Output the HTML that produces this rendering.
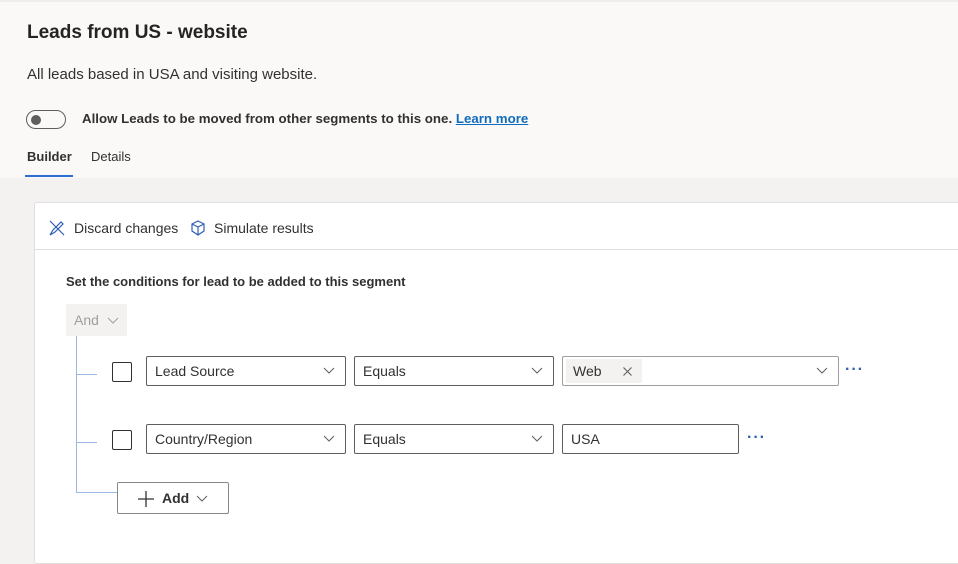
<!DOCTYPE html>
<html><head><style>
body{margin:0;width:958px;height:555px;overflow:hidden;background:#f3f2f1;font-family:"Liberation Sans",sans-serif;color:#323130;position:relative}
.a{position:absolute;white-space:nowrap}
.hdr{left:0;top:0;width:958px;height:178px;background:#faf9f8;border-top:2px solid #eee;box-sizing:border-box}
.card{left:34px;top:202px;width:940px;height:360px;background:#fff;border:1px solid #e1dfdd;border-radius:3px}
.dd{position:absolute;height:30px;border:1px solid #605e5c;border-radius:2px;box-sizing:border-box;background:#fff;font-size:14px;line-height:28px;padding-left:8px;white-space:nowrap}
.chev{position:absolute;right:10px;top:10px}
.cb{position:absolute;width:20px;height:20px;border:1px solid #323130;border-radius:2px;box-sizing:border-box}
.dots{position:absolute;color:#2f5fb3;font-size:16px;font-weight:bold;letter-spacing:1px}
</style></head><body>
<div class="a hdr"></div>
<div class="a" style="left:27px;top:22px;font-size:19px;font-weight:bold;color:#252423">Leads from US - website</div>
<div class="a" style="left:27px;top:66px;font-size:15px">All leads based in USA and visiting website.</div>
<div class="a" style="left:26px;top:110px;width:40px;height:19px;border:1px solid #605e5c;border-radius:10px;box-sizing:border-box"><div class="a" style="left:4px;top:3.5px;width:10px;height:10px;border-radius:50%;background:#605e5c"></div></div>
<div class="a" style="left:82px;top:111px;font-size:13.3px;font-weight:bold">Allow Leads to be moved from other segments to this one. <span style="color:#0f6cbd;text-decoration:underline">Learn more</span></div>
<div class="a" style="left:27px;top:149px;font-size:13px;font-weight:bold">Builder</div>
<div class="a" style="left:91px;top:149px;font-size:13px">Details</div>
<div class="a" style="left:25px;top:175px;width:48px;height:2px;background:#2e6fd6"></div>
<div class="a card"></div>
<svg class="a" style="left:48px;top:219px" width="18" height="18" viewBox="0 0 18 18" fill="none" stroke="#2f5fb3" stroke-width="1.2"><path d="M2 16 L5 11 L13 3 L15 5 L7 13 Z M2 2 L16 16"/></svg>
<div class="a" style="left:74px;top:220px;font-size:14px">Discard changes</div>
<svg class="a" style="left:190px;top:220px" width="16" height="16" viewBox="0 0 16 16" fill="none" stroke="#2f5fb3" stroke-width="1.2"><path d="M8 1 L14 4 L14 11 L8 15 L2 11 L2 4 Z M2 4 L8 7 L14 4 M8 7 L8 15"/></svg>
<div class="a" style="left:214px;top:220px;font-size:14px">Simulate results</div>
<div class="a" style="left:35px;top:249px;width:923px;height:1px;background:#e1dfdd"></div>
<div class="a" style="left:66px;top:274px;font-size:13px;font-weight:bold">Set the conditions for lead to be added to this segment</div>
<div class="a" style="left:66px;top:304px;width:61px;height:32px;background:#f3f2f1;color:#a19f9d;font-size:14px;line-height:32px;padding-left:8px;box-sizing:border-box">And <svg width="12" height="8" style="margin-left:4px"><path d="M1 1 L6 6 L11 1" fill="none" stroke="#a19f9d"/></svg></div>
<div class="a" style="left:76px;top:336px;width:1px;height:157px;background:#9db7e4"></div>
<div class="a" style="left:76px;top:374px;width:21px;height:1px;background:#9db7e4"></div>
<div class="a" style="left:76px;top:442px;width:21px;height:1px;background:#9db7e4"></div>
<div class="a" style="left:76px;top:492px;width:42px;height:1px;background:#9db7e4"></div>
<div class="cb" style="left:112px;top:362px"></div>
<div class="cb" style="left:112px;top:430px"></div>
<div class="dd" style="left:146px;top:356px;width:200px">Lead Source<svg class="chev" width="12" height="8"><path d="M1 1 L6 6 L11 1" fill="none" stroke="#605e5c"/></svg></div>
<div class="dd" style="left:354px;top:356px;width:200px">Equals<svg class="chev" width="12" height="8"><path d="M1 1 L6 6 L11 1" fill="none" stroke="#605e5c"/></svg></div>
<div class="dd" style="left:562px;top:356px;width:277px;border-color:#a19f9d;padding-left:3px"><div class="a" style="left:3px;top:2px;background:#f3f2f1;height:24px;line-height:24px;width:76px;"><span class="a" style="left:7px">Web</span><svg class="a" style="left:57px;top:8px" width="9" height="9"><path d="M0.5 0.5 L8.5 8.5 M8.5 0.5 L0.5 8.5" stroke="#605e5c" stroke-width="1.1"/></svg></div><svg class="chev" width="12" height="8"><path d="M1 1 L6 6 L11 1" fill="none" stroke="#605e5c"/></svg></div>
<div class="dots" style="left:845px;top:361px">···</div>
<div class="dd" style="left:146px;top:424px;width:200px">Country/Region<svg class="chev" width="12" height="8"><path d="M1 1 L6 6 L11 1" fill="none" stroke="#605e5c"/></svg></div>
<div class="dd" style="left:354px;top:424px;width:200px">Equals<svg class="chev" width="12" height="8"><path d="M1 1 L6 6 L11 1" fill="none" stroke="#605e5c"/></svg></div>
<div class="dd" style="left:562px;top:424px;width:177px">USA</div>
<div class="dots" style="left:747px;top:429px">···</div>
<div class="a" style="left:117px;top:482px;width:112px;height:32px;border:1px solid #8a8886;border-radius:2px;box-sizing:border-box;background:#fff;font-size:14px;font-weight:bold;line-height:30px">
<svg class="a" style="left:20px;top:8px" width="16" height="16"><path d="M8 0 V16 M0 8 H16" stroke="#323130" stroke-width="1.3"/></svg>
<span class="a" style="left:44px">Add</span>
<svg class="a" style="left:78px;top:12px" width="12" height="8"><path d="M1 1 L6 6 L11 1" fill="none" stroke="#605e5c"/></svg></div>
</body></html>
